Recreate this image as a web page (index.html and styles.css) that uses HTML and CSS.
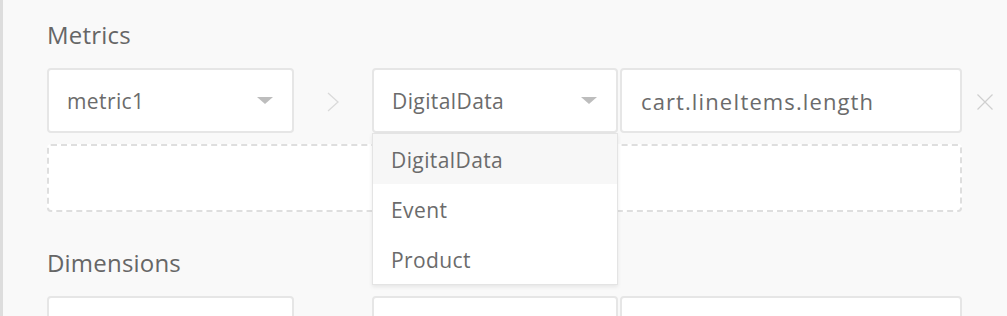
FILE: index.html
```html
<!DOCTYPE html>
<html lang="en">
<head>
    <meta charset="UTF-8">
    <meta name="viewport" content="width=device-width, initial-scale=1.0">
    <title>Metrics mapping</title>
    <link rel="stylesheet" href="styles.css">
</head>
<body>
    <div class="panel">
        <!-- Metrics -->
        <div class="section">
            <h3 class="section-title">Metrics</h3>
            <div class="mapping-row">
                <div class="select field-name">
                    <span class="select-value">metric1</span>
                    <span class="caret"></span>
                </div>
                <div class="arrow">
                    <svg width="12" height="20" viewBox="0 0 12 20">
                        <polyline points="1,1 11,10 1,19" fill="none" stroke="#dadada" stroke-width="1.3"/>
                    </svg>
                </div>
                <div class="select field-source open">
                    <span class="select-value">DigitalData</span>
                    <span class="caret"></span>
                    <ul class="dropdown">
                        <li class="dropdown-item active">DigitalData</li>
                        <li class="dropdown-item">Event</li>
                        <li class="dropdown-item">Product</li>
                    </ul>
                </div>
                <div class="input field-path">cart.lineItems.length</div>
                <div class="remove">
                    <svg width="16" height="16" viewBox="0 0 16 16">
                        <path d="M0.5 0.5 L15.5 15.5 M15.5 0.5 L0.5 15.5" fill="none" stroke="#cfcfcf" stroke-width="1.2"/>
                    </svg>
                </div>
            </div>
            <div class="add-row"></div>
        </div>

        <!-- Dimensions -->
        <div class="section">
            <h3 class="section-title">Dimensions</h3>
            <div class="mapping-row">
                <div class="select field-name"></div>
                <div class="arrow"></div>
                <div class="select field-source"></div>
                <div class="input field-path"></div>
            </div>
        </div>
    </div>
</body>
</html>
```
FILE: styles.css
```css
* {
    margin: 0;
    padding: 0;
    box-sizing: border-box;
    font-family: 'Open Sans', 'Lato', sans-serif;
}

body {
    background-color: #f9f9f9;
    border-left: 3px solid #dddddd;
    height: 100vh;
    overflow: hidden;
}

.panel {
    padding: 20px 0 0 44px;
}

.section-title {
    color: #666666;
    font-size: 24px;
    font-weight: 400;
    line-height: 30px;
    margin-bottom: 18px;
    letter-spacing: 0.2px;
}

.section + .section {
    margin-top: 36px;
}

.mapping-row {
    display: flex;
    align-items: center;
    height: 65px;
}

.select,
.input {
    position: relative;
    height: 65px;
    display: flex;
    align-items: center;
    background-color: white;
    border: 2px solid #e6e6e6;
    border-radius: 4px;
    color: #6b6b6b;
    font-size: 21px;
    letter-spacing: 0.4px;
}

.field-name {
    width: 247px;
    padding: 0 18px;
}

.field-source {
    width: 246px;
    padding: 0 18px;
}

.field-path {
    width: 342px;
    margin-left: 2px;
    padding: 0 19px;
    font-size: 22px;
    letter-spacing: 1.1px;
}

.select-value {
    flex: 1;
}

.caret {
    width: 0;
    height: 0;
    border-left: 8px solid transparent;
    border-right: 8px solid transparent;
    border-top: 7px solid #bdbdbd;
    margin-right: 1px;
}

.arrow {
    width: 78px;
    display: flex;
    justify-content: center;
    padding-top: 3px;
}

.remove {
    margin-left: 15px;
    display: flex;
    padding-top: 2px;
}

.dropdown {
    position: absolute;
    top: 100%;
    left: -2px;
    right: -2px;
    margin-top: 2px;
    list-style: none;
    background-color: white;
    border: 1px solid #e4e4e4;
    box-shadow: 0 2px 4px rgba(0, 0, 0, 0.08);
    z-index: 10;
}

.dropdown-item {
    height: 50px;
    padding: 2px 18px 0;
    line-height: 48px;
    color: #6b6b6b;
    font-size: 21px;
    letter-spacing: 0.4px;
}

.dropdown-item.active {
    background-color: #f7f7f7;
}

.add-row {
    width: 915px;
    height: 68px;
    margin-top: 11px;
    background-color: white;
    border: 2px dashed #dedede;
    border-radius: 4px;
}
```
